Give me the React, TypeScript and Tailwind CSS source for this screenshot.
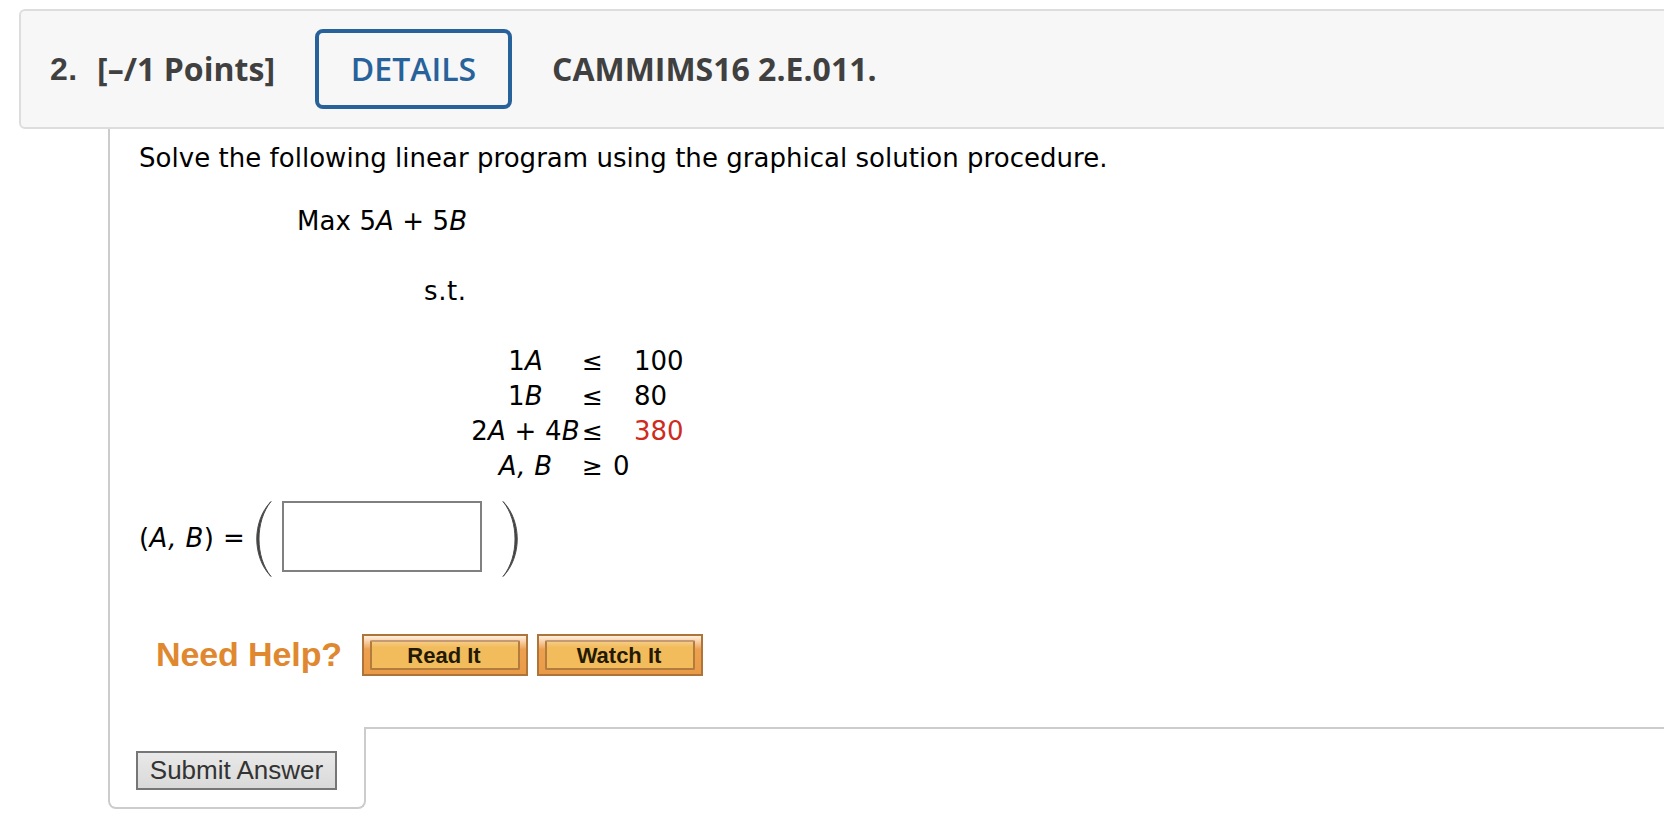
import type { ReactNode } from "react";

function HelpButton({ children }: { children: ReactNode }) {
  return (
    <button className="h-[42px] w-[166px] border-2 border-[#ad753a] bg-linear-to-b from-[#fff0df] from-0% via-[#eda04e] via-35% to-[#ea9b47] px-1.5 pt-1 pb-1">
      <span className="flex h-[30px] w-full items-center justify-center rounded-xs border-2 border-[#b37c3f] border-t-[#c69b73] bg-linear-to-b from-[#f5cb84] to-[#f2bc5c] to-20% pt-0.5 pr-[2px] font-['Liberation_Sans',sans-serif] text-[22px] leading-none font-bold text-[#241a04]">
        {children}
      </span>
    </button>
  );
}

function Row({ left, op, bound, right, red = false }: { left: ReactNode; op: string; bound?: string; right?: string; red?: boolean }) {
  return (
    <div className="flex h-[35px] items-center">
      <div className="w-[113px] text-center tracking-[0.2px] whitespace-nowrap">{left}</div>
      <div className="flex w-[52px] items-center">
        <span className="w-[31px] text-[25px]">{op}</span>
        <span>{bound}</span>
      </div>
      <div className={red ? "text-[#cf2b1d]" : ""}>{right}</div>
    </div>
  );
}

export default function App() {
  return (
    <div className="h-[836px] w-[1664px] overflow-hidden bg-white pt-[9px] font-['DejaVu_Sans',sans-serif] text-[26px] leading-[35px] text-black">
      <header className="ml-[19px] flex h-[120px] w-[1660px] items-center rounded-md border-2 border-[#dddddd] bg-[#f7f7f7] pl-[29px] font-['Open_Sans',sans-serif] text-[32px] leading-[44px] font-bold whitespace-nowrap text-[#404040]">
        <span className="w-[47px] font-['Liberation_Sans',sans-serif] tracking-[0.4px]">2.</span>
        <span className="w-[218px] tracking-[0.05px]">[–/1 Points]</span>
        <button className="h-20 w-[197px] rounded-lg border-4 border-[#27639a] font-semibold text-[#27639a]">DETAILS</button>
        <span className="ml-[40px]">CAMMIMS16 2.E.011.</span>
      </header>

      <main className="ml-[108px] flex h-[598px] flex-col border-l-2 border-[#cccccc] pl-[29px]">
        <p className="mt-[12px] tracking-[0.03px] whitespace-nowrap">Solve the following linear program using the graphical solution procedure.</p>
        <p className="mt-[28px] ml-[158px] tracking-[0.1px] whitespace-nowrap">Max 5<i>A</i> + 5<i>B</i></p>
        <p className="mt-[35px] ml-[285px] tracking-[0.6px]">s.t.</p>
        <div className="mt-[35px] ml-[330px]">
          <Row left={<>1<i>A</i></>} op="≤" right="100" />
          <Row left={<>1<i>B</i></>} op="≤" right="80" />
          <Row left={<>2<i>A</i> + 4<i>B</i></>} op="≤" right="380" red />
          <Row left={<i>A, B</i>} op="≥" bound="0" />
        </div>
        <div className="mt-[17px] flex h-[76px] items-center">
          <span className="w-[116px] pb-0.5 tracking-[0.4px] whitespace-nowrap">(<i>A, B</i>) =</span>
          <svg className="h-[76px] w-[17px]" viewBox="0 0 17 76" fill="none" stroke="#505050">
            <path d="M16 0.5C-3 20 -3 56 16 75.5C0 56 0 20 16 0.5Z" fill="#404040" />
          </svg>
          <input aria-label="Answer" className="mb-[5px] ml-[10px] h-[71px] w-[200px] border-2 border-[#808080] bg-white outline-none" />
          <svg className="ml-[20px] h-[76px] w-[17px]" viewBox="0 0 17 76" fill="none" stroke="#505050">
            <path d="M1 0.5C20 20 20 56 1 75.5C17 56 17 20 1 0.5Z" fill="#404040" />
          </svg>
        </div>
        <div className="mt-[57px] ml-[17px] flex h-[42px] items-center">
          <span className="w-[206px] pb-[2px] font-['Liberation_Sans',sans-serif] text-[34px] font-bold tracking-[-0.1px] whitespace-nowrap text-[#e0882f]">Need Help?</span>
          <div className="flex gap-[9px]">
            <HelpButton>Read It</HelpButton>
            <HelpButton>Watch It</HelpButton>
          </div>
        </div>
      </main>

      <footer className="ml-[108px] flex">
        <div className="h-[82px] w-[258px] rounded-b-lg border-x-2 border-b-2 border-[#cccccc] pt-[24px] pl-[26px]">
          <button className="block h-[39px] w-[201px] border-2 border-[#767676] bg-linear-to-b from-[#e9e9e9] to-[#d9d9d9] font-['Liberation_Sans',sans-serif] text-[26px] leading-[33px] whitespace-nowrap text-[#333333]">Submit Answer</button>
        </div>
        <div className="h-[2px] flex-1 bg-[#cccccc]" />
      </footer>
    </div>
  );
}
